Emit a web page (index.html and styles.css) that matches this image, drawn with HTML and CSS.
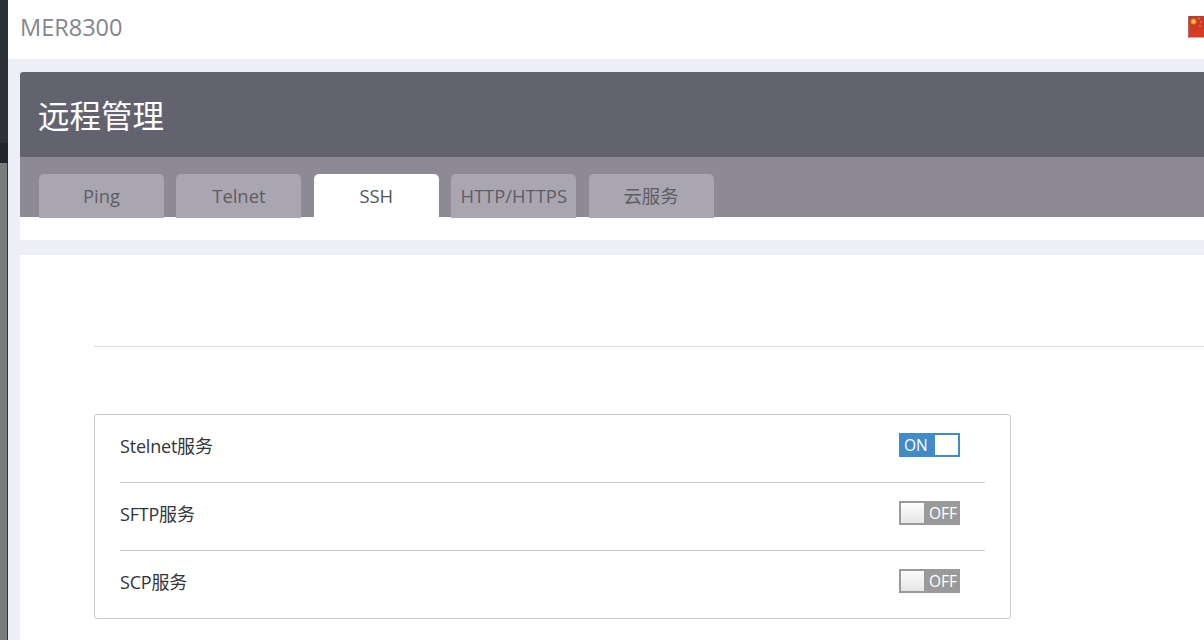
FILE: index.html
```html
<!DOCTYPE html>
<html lang="zh">
<head>
<meta charset="utf-8">
<title>MER8300</title>
<link rel="stylesheet" href="styles.css">
</head>
<body>
<aside class="edge"><div class="edge-top"></div><div class="edge-mid"></div><div class="edge-low"></div></aside>
<div class="app">
  <header class="topbar">
    <span class="brand">MER8300</span>
    <svg class="flag" viewBox="0 0 16 22" width="16" height="22" aria-hidden="true">
      <defs>
        <linearGradient id="flagfill" x1="0" y1="0" x2="0" y2="1">
          <stop offset="0" stop-color="#c23a2c"/>
          <stop offset="1" stop-color="#dc3a20"/>
        </linearGradient>
        <radialGradient id="starglow">
          <stop offset="0" stop-color="#f8e040"/>
          <stop offset="1" stop-color="#e07a2c"/>
        </radialGradient>
      </defs>
      <rect width="16" height="22" fill="url(#flagfill)"/>
      <rect y="21" width="16" height="1" fill="#e3a496"/>
      <rect width="1" height="22" fill="#b8685c"/>
      <circle cx="5.5" cy="5.5" r="3" fill="url(#starglow)"/>
      <circle cx="11" cy="2.5" r=".9" fill="#d98a34"/>
      <circle cx="13" cy="6" r=".9" fill="#d98a34"/>
      <circle cx="12" cy="10" r=".9" fill="#d98a34"/>
    </svg>
  </header>
  <section class="hero">
    <h1 class="hero-title">远程管理</h1>
    <nav class="tabs">
      <a class="tab">Ping</a>
      <a class="tab">Telnet</a>
      <a class="tab tab-active">SSH</a>
      <a class="tab">HTTP/HTTPS</a>
      <a class="tab">云服务</a>
    </nav>
    <div class="hero-foot"></div>
  </section>
  <main class="content">
    <hr class="rule">
    <div class="panel">
      <div class="row">
        <span class="label">Stelnet服务</span>
        <span class="switch switch-on"><span class="switch-text">ON</span><span class="knob"></span></span>
      </div>
      <div class="row">
        <span class="label">SFTP服务</span>
        <span class="switch switch-off"><span class="knob"></span><span class="switch-text">OFF</span></span>
      </div>
      <div class="row">
        <span class="label">SCP服务</span>
        <span class="switch switch-off"><span class="knob"></span><span class="switch-text">OFF</span></span>
      </div>
    </div>
  </main>
</div>
</body>
</html>
```
FILE: styles.css
```css
* { box-sizing: border-box; }
html, body { margin: 0; height: 640px; overflow: hidden; }
body {
  display: flex;
  width: 1204px;
  background: #eeeef7;
  font-family: "Open Sans", "Noto Sans CJK SC", sans-serif;
}
.edge { width: 8px; flex: none; display: flex; flex-direction: column; background: #2e3038; }
.edge-top { height: 143px; background: #2e3038; }
.edge-mid { height: 20px; background: #24252a; }
.edge-low { flex: 1; background: #7a7c7e; border-right: 1px solid #33343a; }
.app { flex: none; width: 1196px; overflow: hidden; }
.topbar {
  height: 59px;
  background: #fff;
  display: flex;
  align-items: center;
  justify-content: space-between;
  padding: 0 0 5px 12px;
}
.brand { font-size: 23.5px; color: #85858f; }
.hero {
  margin: 13px 0 0 12px;
  width: 1184px;
  background: #fff;
  border-radius: 3px 0 0 0;
}
.hero-title {
  margin: 0;
  height: 85px;
  padding: 0 0 0 18px;
  background: #62636f;
  border-radius: 3px 0 0 0;
  color: #fff;
  font-size: 31.5px;
  font-weight: 400;
  line-height: 87px;
}
.tabs {
  height: 60px;
  background: #8d8a95;
  display: flex;
  align-items: flex-start;
  gap: 12.4px;
  padding: 17px 0 0 19px;
}
.tab {
  width: 125px;
  height: 44px;
  flex: none;
  background: #aaa6b1;
  border-radius: 5px 5px 0 0;
  color: #5d5d64;
  font-size: 18.4px;
  line-height: 44px;
  text-align: center;
  white-space: nowrap;
}
.tab-active { height: 43px; background: #fff; color: #55555c; }
.hero-foot { height: 23px; background: #fff; }
.content {
  margin: 15px 0 0 12px;
  width: 1184px;
  height: 385px;
  background: #fff;
  padding: 91px 0 0 74px;
}
.rule { margin: 0; border: 0; border-top: 1px solid #ddd; }
.panel {
  margin-top: 67px;
  width: 917px;
  height: 205px;
  border: 1px solid #ccc;
  border-radius: 3px;
  padding: 0 25px;
}
.row {
  height: 68px;
  display: flex;
  align-items: center;
  justify-content: space-between;
  padding: 0 25px 7px 0;
  border-bottom: 1px solid #ccc;
}
.row:last-child { border-bottom: 0; padding-bottom: 8px; }
.label { font-size: 18px; letter-spacing: -.2px; color: #33333a; }
.switch {
  width: 61px;
  height: 24px;
  display: flex;
  align-items: center;
  justify-content: space-between;
  padding: 2px;
  color: #fff;
  font-size: 15.5px;
}
.switch-on { background: #428bca; }
.switch-off { background: #9a9a9a; }
.switch-text { padding: 0 1px 0 3px; line-height: 20px; }
.knob { width: 23px; height: 20px; background: #fff; }
.switch-off .knob { background: linear-gradient(#fcfcfc, #e6e6e6); }
```
